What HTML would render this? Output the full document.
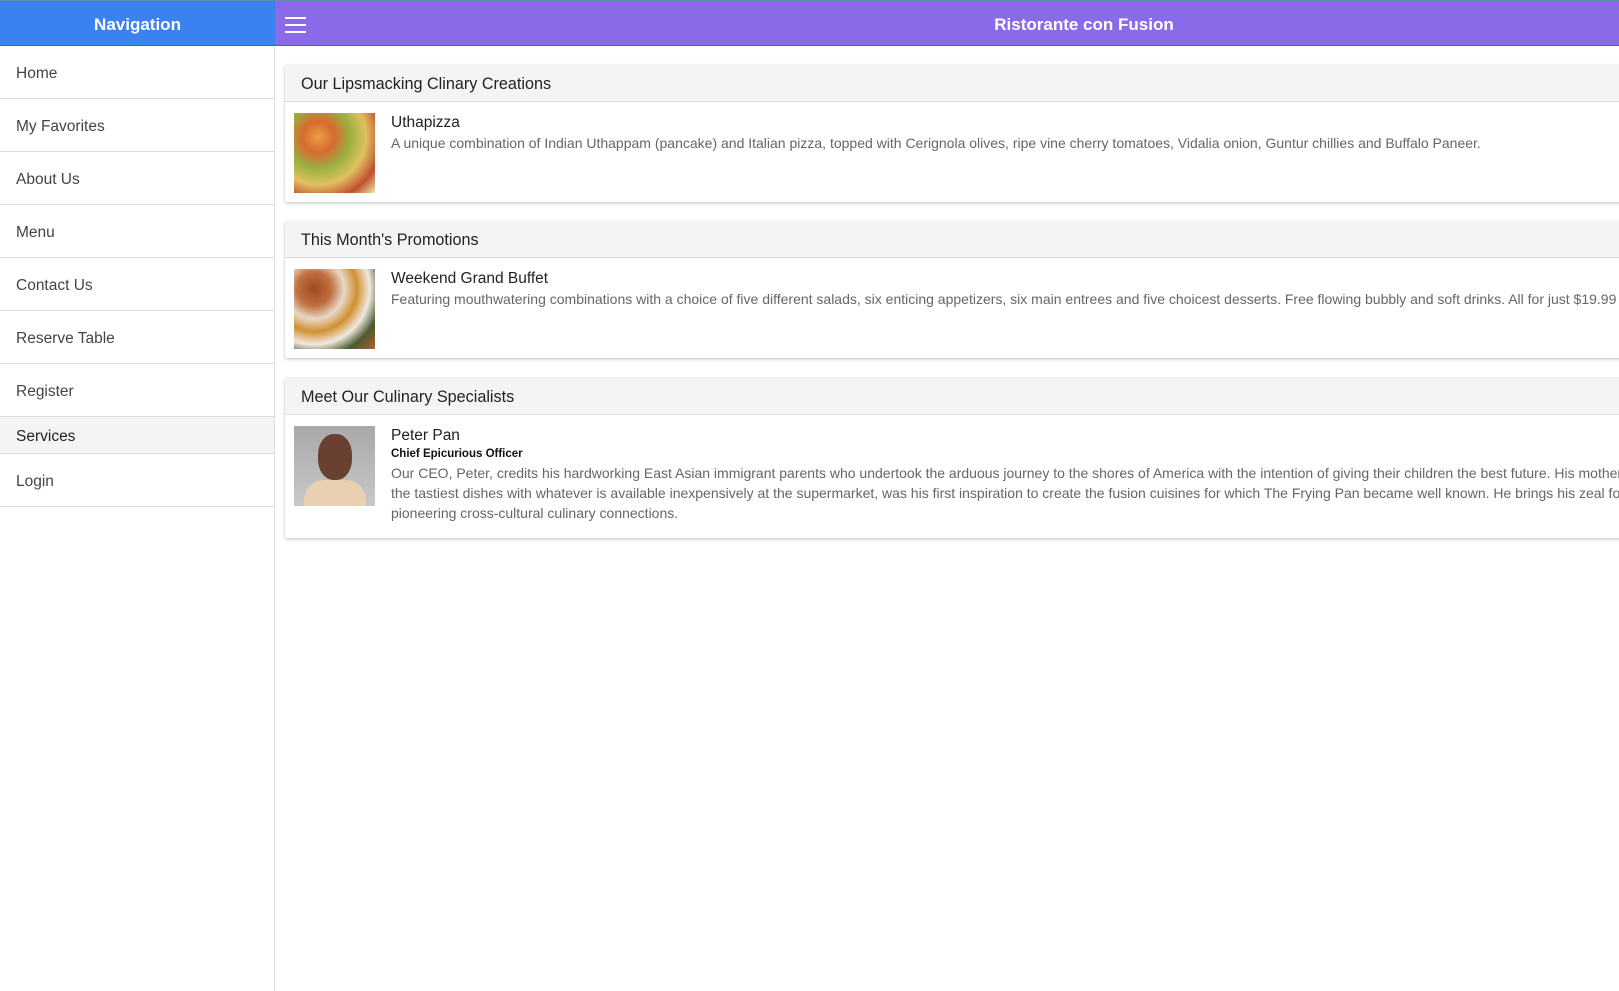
<!DOCTYPE html>
<html><head><meta charset="utf-8"><style>
*{box-sizing:border-box;margin:0;padding:0}
html,body{width:1619px;height:991px;overflow:hidden;background:#fff;font-family:"Liberation Sans",sans-serif;}
.top{position:absolute;left:0;top:0;width:1619px;height:2px;background:#5a8fb0}
.navh{position:absolute;left:0;top:1px;width:275px;height:45px;background:#3b82f0;color:#fff;font-weight:bold;font-size:17px;text-align:center;line-height:47px;border-bottom:1px solid #2a6ad0}
.apph{position:absolute;left:275px;top:1px;width:1344px;height:45px;background:#8a6ae8;color:#fff;font-weight:bold;font-size:17px;text-align:center;line-height:47px;border-bottom:1px solid #6a4ad0;padding-left:274px}
.ham{position:absolute;left:10px;top:16px;width:21px}
.ham div{height:2px;background:#fff;margin-bottom:5px}
.side{position:absolute;left:0;top:46px;width:275px;height:945px;border-right:1px solid #ddd;background:#fff}
.it{height:53px;border-bottom:1px solid #ddd;padding-left:16px;line-height:56px;font-size:15.5px;color:#444}
.sub{height:37px;background:#f4f4f4;border-bottom:1px solid #ddd;padding-left:16px;line-height:39px;font-size:15.5px;color:#222}
.main{position:absolute;left:276px;top:46px;right:0;bottom:0;overflow:hidden}
.card{position:absolute;left:9px;width:1500px;background:#fff;box-shadow:0 1px 3px rgba(0,0,0,.25);border-radius:2px}
.ch{height:37px;background:#f4f4f4;border-bottom:1px solid #ddd;padding-left:16px;line-height:39px;font-size:16.2px;color:#222}
.img{position:absolute;left:9px;top:11px;width:81px;height:80px}
.tx{position:absolute;left:106px;top:10px;white-space:nowrap}
.t{font-size:15.5px;color:#222;line-height:21px}
.s{font-size:11.5px;color:#111;font-weight:bold;line-height:17px}
.d{font-size:14px;color:#666;line-height:20px}
</style></head><body>
<div class="top"></div>
<div class="navh">Navigation</div>
<div class="apph"><div class="ham"><div></div><div></div><div></div></div>Ristorante con Fusion</div>
<div class="side">
<div class="it">Home</div><div class="it">My Favorites</div><div class="it">About Us</div><div class="it">Menu</div><div class="it">Contact Us</div><div class="it">Reserve Table</div><div class="it">Register</div>
<div class="sub">Services</div><div class="it">Login</div>
</div>
<div class="main">
<div class="card" style="top:19px;height:137px">
<div class="ch">Our Lipsmacking Clinary Creations</div>
<div style="position:relative">
<div class="img" style="background:radial-gradient(circle at 30% 30%,#e8a040 0,#d86a30 20%,#9ab040 40%,#e0c060 60%,#c05030 80%,#f0e8b0 100%)"></div>
<div class="tx"><div class="t">Uthapizza</div><div class="d">A unique combination of Indian Uthappam (pancake) and Italian pizza, topped with Cerignola olives, ripe vine cherry tomatoes, Vidalia onion, Guntur chillies and Buffalo Paneer.</div></div>
</div></div>
<div class="card" style="top:175px;height:137px">
<div class="ch">This Month's Promotions</div>
<div style="position:relative">
<div class="img" style="background:radial-gradient(circle at 25% 25%,#a04a20 0,#c07040 20%,#e8d8c8 35%,#d09030 50%,#f0e8e0 65%,#4a5a30 80%,#b06030 100%)"></div>
<div class="tx"><div class="t">Weekend Grand Buffet</div><div class="d">Featuring mouthwatering combinations with a choice of five different salads, six enticing appetizers, six main entrees and five choicest desserts. Free flowing bubbly and soft drinks. All for just $19.99 per person</div></div>
</div></div>
<div class="card" style="top:332px;height:160px">
<div class="ch">Meet Our Culinary Specialists</div>
<div style="position:relative">
<div class="img" style="background:linear-gradient(#a8a8a8,#c8c8c8)"><div style="position:absolute;left:24px;top:8px;width:34px;height:46px;border-radius:45%;background:#6a4030"></div><div style="position:absolute;left:10px;top:54px;width:62px;height:26px;border-radius:20px 20px 0 0;background:#e8d0b0"></div></div>
<div class="tx"><div class="t">Peter Pan</div><div class="s">Chief Epicurious Officer</div><div class="d">Our CEO, Peter, credits his hardworking East Asian immigrant parents who undertook the arduous journey to the shores of America with the intention of giving their children the best future. His mother's wizardy<br>the tastiest dishes with whatever is available inexpensively at the supermarket, was his first inspiration to create the fusion cuisines for which The Frying Pan became well known. He brings his zeal for fusion<br>pioneering cross-cultural culinary connections.</div></div>
</div></div>
</div>
</body></html>
